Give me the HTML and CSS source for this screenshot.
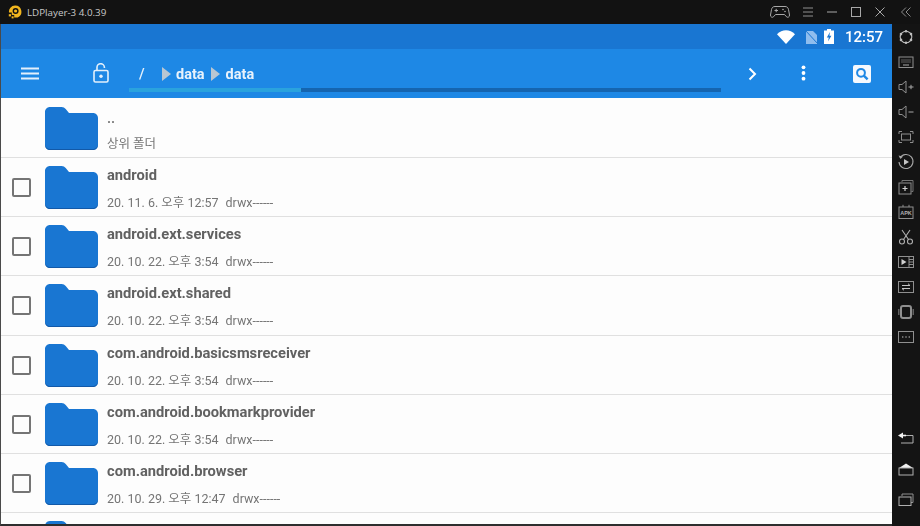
FILE: index.html
```html
<!DOCTYPE html>
<html lang="ko">
<head>
<meta charset="utf-8">
<title>LDPlayer-3 4.0.39</title>
<link rel="stylesheet" href="styles.css">
</head>
<body>
<div class="app">
  <header class="titlebar">
    <svg class="logo" viewBox="0 0 14 14"><path d="M7 .5a6.200 6.200 0 0 1 2.600 11.900H6.200V10H3.800V7.600H1A6.200 6.200 0 0 1 7 .5z" fill="#f2b61e"/><rect x=".8" y="9.200" width="2.200" height="2.200" fill="#f2b61e"/><rect x="3.600" y="11.400" width="2" height="2" fill="#f2b61e"/><circle cx="7.600" cy="6" r="2.300" fill="none" stroke="#111" stroke-width="1.400"/></svg>
    <span class="app-name">LDPlayer-3 4.0.39</span>
    <div class="win-controls">
      <svg class="win-icon pad" viewBox="0 0 20 14"><path d="M5 1.500h10c2 0 3 1 3.500 3l1 5.500c.3 2-2 3-3.200 1.600L14.500 9.500h-9L3.700 11.600C2.500 13 .2 12 .5 10l1-5.500C2 2.500 3 1.500 5 1.500z" fill="none" stroke="#a8a8a8" stroke-width="1"/><path d="M4.500 5.500h3.500M6.200 3.800v3.400" stroke="#a8a8a8"/><circle cx="13" cy="4.500" r=".8" fill="#a8a8a8"/><circle cx="15" cy="6.500" r=".8" fill="#a8a8a8"/></svg>
      <svg class="win-icon menu" viewBox="0 0 12 10"><path d="M1 1h10M1 5h10M1 9h10" stroke="#8f8f8f" stroke-width="1"/></svg>
      <svg class="win-icon min" viewBox="0 0 12 10"><path d="M1 5h10" stroke="#a8a8a8"/></svg>
      <svg class="win-icon max" viewBox="0 0 12 12"><rect x="1.500" y="1.500" width="9" height="9" fill="none" stroke="#a8a8a8"/></svg>
      <svg class="win-icon close" viewBox="0 0 12 12"><path d="M1.500 1.500l9 9M10.500 1.500l-9 9" stroke="#a8a8a8"/></svg>
    </div>
    <svg class="collapse" viewBox="0 0 12 12"><path d="M6 1.500L1.500 6 6 10.500M10.500 1.500L6 6l4.500 4.500" fill="none" stroke="#8a8a8a"/></svg>
  </header>
  <div class="body-row">
    <main class="screen">
      <div class="statusbar">
        <svg class="st-wifi" viewBox="0 0 18 14"><path d="M0 4.200C5-1 13-1 18 4.200L9 14z" fill="#fff"/></svg>
        <svg class="st-sim" viewBox="0 0 13 14"><path d="M1 1h7l4 4v9H1z" fill="#8fbdee"/><path d="M0 0l13 14" stroke="#1976d2" stroke-width="1"/></svg>
        <svg class="st-batt" viewBox="0 0 10 15"><path d="M3 0h4v1.500h3V15H0V1.500h3z" fill="#fff"/><path d="M6 3L2.800 8.500h2L4 12.500 7.400 6.800h-2z" fill="#1976d2"/></svg>
        <span class="clock">12:57</span>
      </div>
      <div class="toolbar">
        <button class="tool"><svg class="i-ham" viewBox="0 0 18 13"><path d="M0 1.500h18M0 6.500h18M0 11.500h18" stroke="#e3f0fc" stroke-width="2"/></svg></button>
        <button class="tool lock"><svg class="i-lock" viewBox="0 0 16 20"><path d="M4 7V4.500a3.700 3.700 0 0 1 7.400-.2V5" fill="none" stroke="#e3f0fc" stroke-width="1.600"/><rect x="1" y="7.500" width="14" height="11.500" rx="1.500" fill="none" stroke="#e3f0fc" stroke-width="1.600"/><circle cx="8" cy="13.200" r="1.700" fill="#e3f0fc"/></svg></button>
        <div class="path">
          <div class="crumbs">
            <span class="root">/</span>
            <span class="arrow first"></span>
            <span class="crumb">data</span>
            <span class="arrow"></span>
            <span class="crumb">data</span>
          </div>
          <div class="progress"><div class="progress-fill"></div></div>
        </div>
        <button class="tool next"><svg class="i-chev" viewBox="0 0 9 14"><path d="M1.500 1.500L7 7l-5.500 5.500" fill="none" stroke="#fff" stroke-width="2"/></svg></button>
        <button class="tool"><svg class="i-dots" viewBox="0 0 5 16"><circle cx="2.500" cy="2.300" r="1.900" fill="#fff"/><circle cx="2.500" cy="8" r="1.900" fill="#fff"/><circle cx="2.500" cy="13.700" r="1.900" fill="#fff"/></svg></button>
        <button class="tool search"><svg class="i-search" viewBox="0 0 18 18"><rect width="18" height="18" rx="2" fill="#f5f9fe"/><circle cx="8" cy="7.800" r="3.900" fill="none" stroke="#1e88e5" stroke-width="2"/><path d="M10.800 10.600l3.800 3.800" stroke="#1e88e5" stroke-width="2.400"/></svg></button>
      </div>
      <div class="list">
        <div class="row">
          <span class="check-slot"></span>
          <svg class="folder" viewBox="0 0 53 43"><use href="#folder"/></svg>
          <div class="info"><div class="name parent">..</div><div class="meta">상위 폴더</div></div>
        </div>
        <div class="row">
          <span class="check-slot"><span class="check"></span></span>
          <svg class="folder" viewBox="0 0 53 43"><use href="#folder"/></svg>
          <div class="info"><div class="name">android</div><div class="meta"><span>20. 11. 6. 오후 12:57</span><span class="perm">drwx------</span></div></div>
        </div>
        <div class="row">
          <span class="check-slot"><span class="check"></span></span>
          <svg class="folder" viewBox="0 0 53 43"><use href="#folder"/></svg>
          <div class="info"><div class="name">android.ext.services</div><div class="meta"><span>20. 10. 22. 오후 3:54</span><span class="perm">drwx------</span></div></div>
        </div>
        <div class="row">
          <span class="check-slot"><span class="check"></span></span>
          <svg class="folder" viewBox="0 0 53 43"><use href="#folder"/></svg>
          <div class="info"><div class="name">android.ext.shared</div><div class="meta"><span>20. 10. 22. 오후 3:54</span><span class="perm">drwx------</span></div></div>
        </div>
        <div class="row">
          <span class="check-slot"><span class="check"></span></span>
          <svg class="folder" viewBox="0 0 53 43"><use href="#folder"/></svg>
          <div class="info"><div class="name">com.android.basicsmsreceiver</div><div class="meta"><span>20. 10. 22. 오후 3:54</span><span class="perm">drwx------</span></div></div>
        </div>
        <div class="row">
          <span class="check-slot"><span class="check"></span></span>
          <svg class="folder" viewBox="0 0 53 43"><use href="#folder"/></svg>
          <div class="info"><div class="name">com.android.bookmarkprovider</div><div class="meta"><span>20. 10. 22. 오후 3:54</span><span class="perm">drwx------</span></div></div>
        </div>
        <div class="row">
          <span class="check-slot"><span class="check"></span></span>
          <svg class="folder" viewBox="0 0 53 43"><use href="#folder"/></svg>
          <div class="info"><div class="name">com.android.browser</div><div class="meta"><span>20. 10. 29. 오후 12:47</span><span class="perm">drwx------</span></div></div>
        </div>
        <div class="row">
          <span class="check-slot"><span class="check"></span></span>
          <svg class="folder" viewBox="0 0 53 43"><use href="#folder"/></svg>
          <div class="info"><div class="name">com.android.captiveportallogin</div></div>
        </div>
      </div>
    </main>
    <aside class="sidebar">
      <div class="side-group">
        <span class="side-item"><svg viewBox="0 0 18 18"><circle cx="9" cy="9" r="5.800" fill="none" stroke="#bdbdbd" stroke-width="1.100"/><g fill="#bdbdbd"><circle cx="9" cy="3.200" r="1.300"/><circle cx="9" cy="14.800" r="1.300"/><circle cx="4" cy="6.100" r="1.300"/><circle cx="14" cy="6.100" r="1.300"/><circle cx="4" cy="11.900" r="1.300"/><circle cx="14" cy="11.900" r="1.300"/></g></svg></span>
        <span class="side-item"><svg viewBox="0 0 18 18"><rect x="2" y="4" width="14" height="10.500" fill="none" stroke="#8f8f8f"/><path d="M4.500 7h9M4.500 9h9" stroke="#a8a8a8" stroke-dasharray="1 1"/><path d="M6 12h6" stroke="#a8a8a8"/></svg></span>
        <span class="side-item"><svg viewBox="0 0 18 18"><path d="M2 6.500h3L9 3v12l-4-3.500H2z" fill="none" stroke="#8f8f8f"/><path d="M11.500 9h5M14 6.800v4.400" stroke="#a8a8a8"/></svg></span>
        <span class="side-item"><svg viewBox="0 0 18 18"><path d="M2 6.500h3L9 3v12l-4-3.500H2z" fill="none" stroke="#8f8f8f"/><path d="M11.500 9h5" stroke="#a8a8a8"/></svg></span>
        <span class="side-item"><svg viewBox="0 0 18 18"><path d="M2 6V3.500h3M13 3.500h3V6M2 12v2.500h3M13 14.500h3V12" fill="none" stroke="#8f8f8f"/><rect x="4.500" y="6" width="9" height="6" fill="none" stroke="#8f8f8f"/></svg></span>
        <span class="side-item"><svg viewBox="0 0 18 18"><path d="M3 4.800A7 7 0 1 1 2 9" fill="none" stroke="#a8a8a8" stroke-width="1.100"/><path d="M1.500 2.500L3.500 6 6 3.500z" fill="#a8a8a8"/><path d="M7 6l5 3-5 3z" fill="#c4c4c4"/></svg></span>
        <span class="side-item"><svg viewBox="0 0 18 18"><path d="M5 4V2.500h11v11h-1.500" fill="none" stroke="#757575"/><rect x="2" y="5" width="12" height="11" fill="none" stroke="#8f8f8f"/><path d="M5.500 10.500h5M8 8v5" stroke="#d0d0d0" stroke-width="1.200"/></svg></span>
        <span class="side-item"><svg viewBox="0 0 18 18"><rect x="2" y="4" width="14" height="11.500" fill="none" stroke="#8f8f8f"/><path d="M6 4V1.800M12 4V1.800" stroke="#8f8f8f"/><text class="apk" x="9" y="12">APK</text></svg></span>
        <span class="side-item"><svg viewBox="0 0 18 18"><circle cx="5" cy="13.500" r="2.500" fill="none" stroke="#b0b0b0" stroke-width="1.100"/><circle cx="13" cy="13.500" r="2.500" fill="none" stroke="#b0b0b0" stroke-width="1.100"/><path d="M6.500 11.500L13 2M11.500 11.500L5 2" stroke="#b0b0b0" stroke-width="1.100"/></svg></span>
        <span class="side-item"><svg viewBox="0 0 18 18"><rect x="1.500" y="3.500" width="15" height="11" fill="none" stroke="#8f8f8f"/><path d="M4.500 6l5 3-5 3z" fill="#d0d0d0"/><path d="M12 3.500v11M12 6.500h4.500M12 9h4.500M12 11.500h4.500" stroke="#8f8f8f"/></svg></span>
        <span class="side-item"><svg viewBox="0 0 18 18"><rect x="1.500" y="3.500" width="15" height="11" fill="none" stroke="#8f8f8f"/><path d="M5 7.500h8l-2-1.800M13 10.500H5l2 1.800" fill="none" stroke="#c4c4c4"/></svg></span>
        <span class="side-item"><svg viewBox="0 0 18 18"><rect x="4" y="3" width="10" height="12" rx="2" fill="none" stroke="#8f8f8f" stroke-width="2"/><path d="M1.800 6v6M16.200 6v6" stroke="#757575" stroke-width="1.200"/></svg></span>
        <span class="side-item"><svg viewBox="0 0 18 18"><rect x="1.500" y="3.500" width="15" height="11" fill="none" stroke="#8f8f8f"/><path d="M5 9h1.400M8.300 9h1.400M11.600 9H13" stroke="#c4c4c4" stroke-width="1.100"/></svg></span>
      </div>
      <div class="side-group">
        <span class="nav-item"><svg viewBox="0 0 18 18"><path d="M5 5.500h11V13H4" fill="none" stroke="#b0b0b0"/><path d="M1 5.500L6 2.500v6z" fill="#f0f0f0"/><path d="M4 4.700h5v1.600H4z" fill="#f0f0f0"/></svg></span>
        <span class="nav-item"><svg viewBox="0 0 18 18"><path d="M2 8L9 3.500 16 8z" fill="#f0f0f0"/><rect x="2" y="8" width="14" height="7" fill="none" stroke="#b0b0b0"/></svg></span>
        <span class="nav-item"><svg viewBox="0 0 18 18"><path d="M5 5V3h11v8.500h-2" fill="none" stroke="#8f8f8f"/><rect x="2" y="6" width="12" height="8.500" fill="none" stroke="#b0b0b0"/></svg></span>
      </div>
    </aside>
  </div>
</div>
<svg class="defs" aria-hidden="true">
  <symbol id="folder" viewBox="0 0 53 43">
    <path d="M5 0h11.500c2 0 3 .7 4.200 2l3.300 4h24c2.800 0 5 2.200 5 5v27c0 2.800-2.200 5-5 5H5c-2.800 0-5-2.200-5-5V5c0-2.800 2.200-5 5-5z" fill="#1976d2"/>
    <path d="M0 38c0 2.800 2.200 5 5 5h43c2.800 0 5-2.200 5-5v-1c0 2.800-2.200 5-5 5H5c-2.800 0-5-2.200-5-5z" fill="#1259a8"/>
  </symbol>
</svg>
</body>
</html>
```
FILE: styles.css
```css
* { box-sizing: border-box; }
html, body { margin: 0; height: 100%; overflow: hidden; background: #141414; }
body { font-family: Roboto, "Noto Sans CJK KR", sans-serif; }
button { border: 0; background: none; padding: 0; }
svg { display: block; }
.defs { width: 0; height: 0; }

.app { width: 920px; height: 526px; display: flex; flex-direction: column; }

.titlebar { height: 24px; flex: none; display: flex; align-items: center; background: #121212; padding-left: 8px; }
.logo { width: 14px; height: 14px; flex: none; }
.app-name { margin-left: 5px; color: #c9c9c9; font: 9.800px "Open Sans", sans-serif; }
.win-controls { margin-left: auto; display: flex; align-items: center; }
.win-icon { flex: none; }
.pad { width: 20px; height: 14px; margin-right: 12px; }
.menu { width: 12px; height: 10px; margin-right: 12px; }
.min { width: 12px; height: 10px; margin-right: 12px; }
.max { width: 12px; height: 12px; margin-right: 12px; }
.close { width: 12px; height: 12px; }
.collapse { width: 12px; height: 12px; margin: 0 8px 0 14px; flex: none; }

.body-row { flex: 1; min-height: 0; display: flex; }
.screen { width: 892px; flex: none; display: flex; flex-direction: column; overflow: hidden; border-left: 1px solid #4a4a4a; border-bottom: 2px solid #2e2e2e; background: #fdfdfd; filter: blur(.3px); }

.statusbar { height: 25px; flex: none; display: flex; align-items: center; background: #1976d2; padding-left: 776px; }
.st-wifi { width: 18px; height: 14px; }
.st-sim { width: 13px; height: 14px; margin-left: 10px; }
.st-batt { width: 10px; height: 15px; margin-left: 6px; }
.clock { margin-left: 11px; color: #fff; font-size: 15px; font-weight: 500; }

.toolbar { height: 49px; flex: none; display: flex; background: #1e88e5; padding-left: 4px; }
.tool { width: 50px; height: 49px; flex: none; display: flex; align-items: center; justify-content: center; }
.lock { margin-left: 21px; }
.next { margin-left: 6px; margin-right: 1px; }
.search { margin-left: 9px; }
.i-ham { width: 18px; height: 13px; }
.i-lock { width: 16px; height: 20px; margin-top: -2px; }
.i-chev { width: 9px; height: 14px; }
.i-dots { width: 5px; height: 16px; margin-top: -1px; }
.i-search { width: 18px; height: 18px; }

.path { width: 592px; margin-left: 3px; flex: none; padding-top: 11px; }
.crumbs { height: 28px; display: flex; align-items: center; padding-left: 10px; color: #e8f2fc; font-size: 14.500px; font-weight: 700; }
.root { width: 6px; font-weight: 500; }
.arrow { width: 0; height: 0; margin: 0 6px; border-left: 9px solid #b9c6d2; border-top: 7.500px solid transparent; border-bottom: 7.500px solid transparent; }
.arrow.first { margin-left: 17px; margin-right: 5px; }
.progress { height: 4px; background: #1565b0; }
.progress-fill { width: 172px; height: 100%; background: #2aa3de; }

.list { flex: 1; min-height: 0; padding-top: 1px; overflow: hidden; }
.row { height: 59.130px; display: flex; align-items: flex-start; border-bottom: 1px solid #e0e0e0; }
.check-slot { width: 44px; flex: none; padding: 20px 0 0 11px; }
.check { display: block; width: 19px; height: 19px; border: 2px solid #757575; border-radius: 2px; }
.folder { width: 53px; height: 43px; margin-top: 8px; flex: none; }
.info { margin-left: 9px; padding-top: 7px; }
.name { height: 20px; line-height: 20px; color: #616161; font-size: 14.700px; font-weight: 700; }
.name.parent { font-weight: 500; color: #757575; line-height: 24px; }
.meta { margin-top: 8px; height: 20px; line-height: 20px; color: #757575; font-size: 12.500px; display: flex; }
.perm { margin-left: 7px; }

.sidebar { flex: 1; min-width: 0; display: flex; flex-direction: column; justify-content: space-between; background: #141414; padding: 0 0 11px; }
.side-group { display: flex; flex-direction: column; }
.side-item { height: 25px; display: flex; align-items: center; justify-content: center; }
.side-item svg, .nav-item svg { width: 18px; height: 18px; }
.nav-item { height: 30.500px; display: flex; align-items: center; justify-content: center; }
.apk { font: 700 5.500px "Liberation Sans", sans-serif; fill: #b0b0b0; text-anchor: middle; }
```
